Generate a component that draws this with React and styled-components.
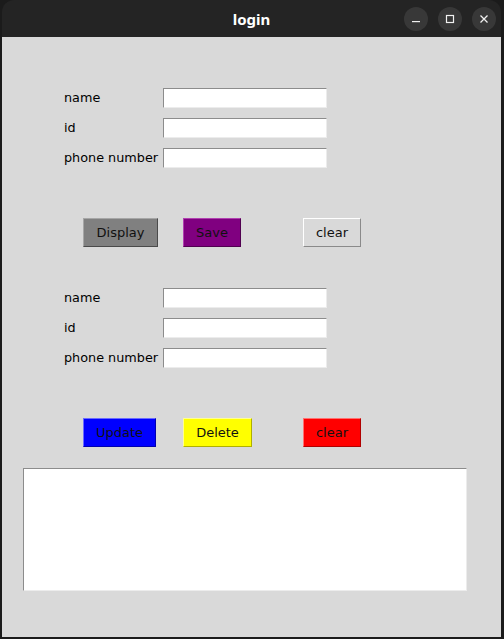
import React from "react";
import styled, { createGlobalStyle } from "styled-components";

const GlobalStyle = createGlobalStyle`
    html, body {
        margin: 0;
        padding: 0;
        background: #1b1b1b;
        font-family: "DejaVu Sans", "Liberation Sans", sans-serif;
    }
`

const Window = styled.div`
    margin-left: 2px;
    width: 499px;
    display: flex;
    flex-direction: column;
`
const TitleBar = styled.div`
    height: 37px;
    background: #242424;
    border-radius: 12px 12px 0 0;
    display: flex;
    align-items: center;
    justify-content: flex-end;
    position: relative;
    padding-right: 5px;
    box-sizing: border-box;
    gap: 10px;
`
const Title = styled.span`
    position: absolute;
    left: 0;
    right: 0;
    text-align: center;
    color: #ffffff;
    font-family: "Noto Sans", "DejaVu Sans", sans-serif;
    font-weight: 700;
    font-size: 15px;
    pointer-events: none;
`
const WinButton = styled.div`
    width: 24px;
    height: 24px;
    border-radius: 50%;
    background: #383838;
    display: flex;
    align-items: center;
    justify-content: center;
    position: relative;
    z-index: 1;
`
const Content = styled.div`
    height: 600px;
    background: #d9d9d9;
    box-sizing: border-box;
    padding-top: 51px;
    display: flex;
    flex-direction: column;
`
const Form = styled.div`
    display: grid;
    grid-template-columns: 99px 164px;
    row-gap: 10px;
    padding-left: 62px;
    margin-top: ${p => p.$mt || 0}px;
`
const Label = styled.span`
    font-size: 12.8px;
    color: #000;
    align-self: center;
    padding-bottom: 2px;
    white-space: nowrap;
`
const Entry = styled.div`
    height: 20px;
    background: #fff;
    box-sizing: border-box;
    border-top: 1px solid #8c8c8c;
    border-left: 1px solid #8c8c8c;
    border-bottom: 1px solid #ececec;
    border-right: 1px solid #ececec;
`
const ButtonRow = styled.div`
    display: flex;
    padding-left: 81px;
    margin-top: ${p => p.$mt}px;
`
const Button = styled.div`
    width: ${p => p.$w}px;
    height: 29px;
    margin-left: ${p => p.$ml || 0}px;
    box-sizing: border-box;
    background: ${p => p.$bg};
    border-top: 1px solid ${p => p.$light};
    border-left: 1px solid ${p => p.$light};
    border-bottom: 1px solid ${p => p.$dark};
    border-right: 1px solid ${p => p.$dark};
    display: flex;
    align-items: center;
    justify-content: center;
    font-size: 13px;
    color: #111;
`
const TextBox = styled.div`
    margin: 21px 0 0 21px;
    width: 444px;
    height: 123px;
    background: #fff;
    box-sizing: border-box;
    border-top: 1px solid #8c8c8c;
    border-left: 1px solid #8c8c8c;
    border-bottom: 1px solid #ececec;
    border-right: 1px solid #ececec;
`

const fields = ["name", "id", "phone number"];

const FormBlock = ({ mt }) => (
    <Form $mt={mt}>
        {fields.map((f) => (
            <React.Fragment key={f}>
                <Label>{f}</Label>
                <Entry />
            </React.Fragment>
        ))}
    </Form>
)

const App = () => {
    return (
        <>
            <GlobalStyle />
            <Window>
                <TitleBar>
                    <Title>login</Title>
                    <WinButton>
                        <svg width="10" height="10" viewBox="0 0 10 10">
                            <rect x="1" y="7" width="8" height="1.2" fill="#f0f0f0" />
                        </svg>
                    </WinButton>
                    <WinButton>
                        <svg width="10" height="10" viewBox="0 0 10 10">
                            <rect x="1.5" y="1.5" width="7" height="7" fill="none" stroke="#f0f0f0" strokeWidth="1.2" />
                        </svg>
                    </WinButton>
                    <WinButton>
                        <svg width="10" height="10" viewBox="0 0 10 10">
                            <path d="M1.5 1.5 L8.5 8.5 M8.5 1.5 L1.5 8.5" stroke="#f0f0f0" strokeWidth="1.3" />
                        </svg>
                    </WinButton>
                </TitleBar>
                <Content>
                    <FormBlock />
                    <ButtonRow $mt={50}>
                        <Button $w={75} $bg="#808080" $light="#a6a6a6" $dark="#4a4a4a">Display</Button>
                        <Button $w={58} $ml={25} $bg="#800080" $light="#b040b0" $dark="#500050">Save</Button>
                        <Button $w={58} $ml={62} $bg="#d9d9d9" $light="#ffffff" $dark="#8a8a8a">clear</Button>
                    </ButtonRow>
                    <FormBlock mt={41} />
                    <ButtonRow $mt={50}>
                        <Button $w={73} $bg="#0000ff" $light="#6a6aff" $dark="#0000b0">Update</Button>
                        <Button $w={69} $ml={27} $bg="#ffff00" $light="#ffff90" $dark="#b0b000">Delete</Button>
                        <Button $w={58} $ml={51} $bg="#ff0000" $light="#ff7070" $dark="#b00000">clear</Button>
                    </ButtonRow>
                    <TextBox />
                </Content>
            </Window>
        </>
    )
}

export default App
